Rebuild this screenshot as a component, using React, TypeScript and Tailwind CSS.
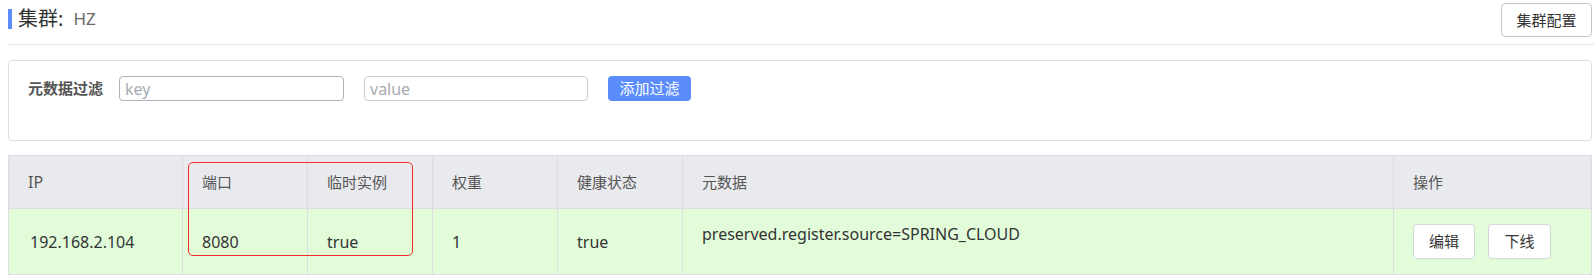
import React from 'react';

const columns = [
  { key: 'ip', title: 'IP', width: 'w-[174px]' },
  { key: 'port', title: '端口', width: 'w-[125px]' },
  { key: 'ephemeral', title: '临时实例', width: 'w-[125px]' },
  { key: 'weight', title: '权重', width: 'w-[125px]' },
  { key: 'healthy', title: '健康状态', width: 'w-[125px]' },
  { key: 'metadata', title: '元数据', width: 'w-[711px]' },
  { key: 'action', title: '操作', width: 'flex-1' },
];

const instance = {
  ip: '192.168.2.104',
  port: '8080',
  ephemeral: 'true',
  weight: '1',
  healthy: 'true',
  metadata: 'preserved.register.source=SPRING_CLOUD',
};

function App() {
  return (
    <div className="w-[1594px] h-[278px] bg-white text-[15px] text-[#333] font-['Noto_Sans','Noto_Sans_CJK_SC',sans-serif]">
      {/* HEADER */}
      <div className="ml-2 h-[45px] flex items-start justify-between border-b border-[#e6e6e6] pr-[2px]">
        <div className="mt-[9px] flex items-center h-[20px]">
          <span className="w-1 h-5 bg-[#5b8cfb]" />
          <span className="ml-[6px] text-[20px] leading-[20px] text-[#333]">集群:</span>
          <span className="ml-[10px] text-[17px] leading-[20px] text-[#666]">HZ</span>
        </div>
        <button className="mt-[3px] w-[91px] h-[34px] rounded border border-[#c4c6ce] bg-white text-[15px] text-[#333]">
          集群配置
        </button>
      </div>

      {/* FILTER */}
      <div className="mt-[15px] ml-2 mr-[2px] h-[81px] rounded border border-[#dcdfe6] pt-[15px] pl-[19px]">
        <div className="flex items-center h-[25px]">
          <label className="w-[91px] text-[15px] font-bold text-[#555]">元数据过滤</label>
          <input
            className="w-[225px] h-[25px] rounded border border-[#aeb0bb] px-[5px] text-[16px] placeholder:text-[#a8abb2] outline-none"
            placeholder="key"
          />
          <input
            className="ml-[20px] w-[224px] h-[25px] rounded border border-[#c8cad3] px-[5px] text-[16px] placeholder:text-[#a8abb2] outline-none"
            placeholder="value"
          />
          <button className="ml-[20px] w-[83px] h-[25px] rounded bg-[#5a8cfd] text-white text-[15px]">
            添加过滤
          </button>
        </div>
      </div>

      {/* TABLE */}
      <div className="relative mt-[14px] ml-2 mr-[2px] border-l border-t border-[#dcdde2]">
        <div className="flex h-[53px] bg-[#e9eaee] text-[#555]">
          {columns.map((c) => (
            <div
              key={c.key}
              className={`${c.width} flex items-center pl-[19px] border-r border-b border-[#dcdde2] ${
                c.key === 'ip' ? 'text-[16px]' : ''
              }`}
            >
              {c.title}
            </div>
          ))}
        </div>
        <div className="flex h-[66px] bg-[#e2fcda] text-[16px] text-[#333]">
          <div className="w-[174px] flex items-center pl-[21px] border-r border-b border-[#dcdde2]">{instance.ip}</div>
          <div className="w-[125px] flex items-center pl-[19px] border-r border-b border-[#dcdde2]">{instance.port}</div>
          <div className="w-[125px] flex items-center pl-[19px] border-r border-b border-[#dcdde2]">{instance.ephemeral}</div>
          <div className="w-[125px] flex items-center pl-[19px] border-r border-b border-[#dcdde2]">{instance.weight}</div>
          <div className="w-[125px] flex items-center pl-[19px] border-r border-b border-[#dcdde2]">{instance.healthy}</div>
          <div className="w-[711px] pt-[13px] pl-[19px] border-r border-b border-[#dcdde2]">{instance.metadata}</div>
          <div className="flex-1 flex items-center gap-[13px] pl-[19px] border-r border-b border-[#dcdde2]">
            <button className="w-[62px] h-[35px] rounded border border-[#d4d6dc] bg-white text-[15px] text-[#333]">编辑</button>
            <button className="w-[63px] h-[35px] rounded border border-[#d4d6dc] bg-white text-[15px] text-[#333]">下线</button>
          </div>
        </div>

        {/* highlight */}
        <div className="absolute left-[179px] top-[6px] w-[225px] h-[94px] rounded-[5px] border border-[#f52b2b] pointer-events-none" />
      </div>
    </div>
  );
}

export default App;
